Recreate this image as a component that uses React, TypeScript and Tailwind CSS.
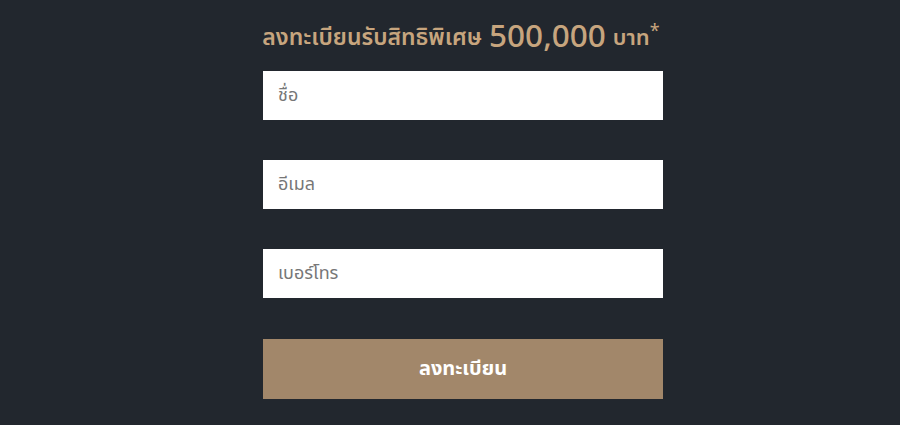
export default function App() {
  const font = { fontFamily: '"Noto Sans Thai", "Noto Sans", "Liberation Sans", sans-serif' };
  return (
    <div className="w-[900px] h-[425px] bg-[#22272e] flex flex-col items-center pl-[26px]" style={font}>
      <div className="mt-[20px] h-[36px] flex items-center text-[#c7a57e] pr-[4px]">
        <span className="text-[23px] font-semibold">ลงทะเบียนรับสิทธิพิเศษ</span>
        <span className="text-[31.5px] font-medium ml-[7px] leading-none">500,000</span>
        <span className="text-[22px] font-semibold ml-[7px]">บาท</span>
        <span className="text-[18px] self-start -mt-[2px]">*</span>
      </div>
      <div className="w-[400px] mt-[15px] flex flex-col">
        <input className="h-[49px] bg-white px-[15px] text-[18px] text-[#555] placeholder:text-[#777] outline-none" placeholder="ชื่อ" />
        <input className="h-[49px] mt-[40px] bg-white px-[15px] text-[18px] text-[#555] placeholder:text-[#777] outline-none" placeholder="อีเมล" />
        <input className="h-[49px] mt-[40px] bg-white px-[15px] text-[18px] text-[#555] placeholder:text-[#777] outline-none" placeholder="เบอร์โทร" />
        <button className="h-[60px] mt-[41px] bg-[#a2876a] text-white text-[20px] font-bold">ลงทะเบียน</button>
      </div>
    </div>
  );
}
